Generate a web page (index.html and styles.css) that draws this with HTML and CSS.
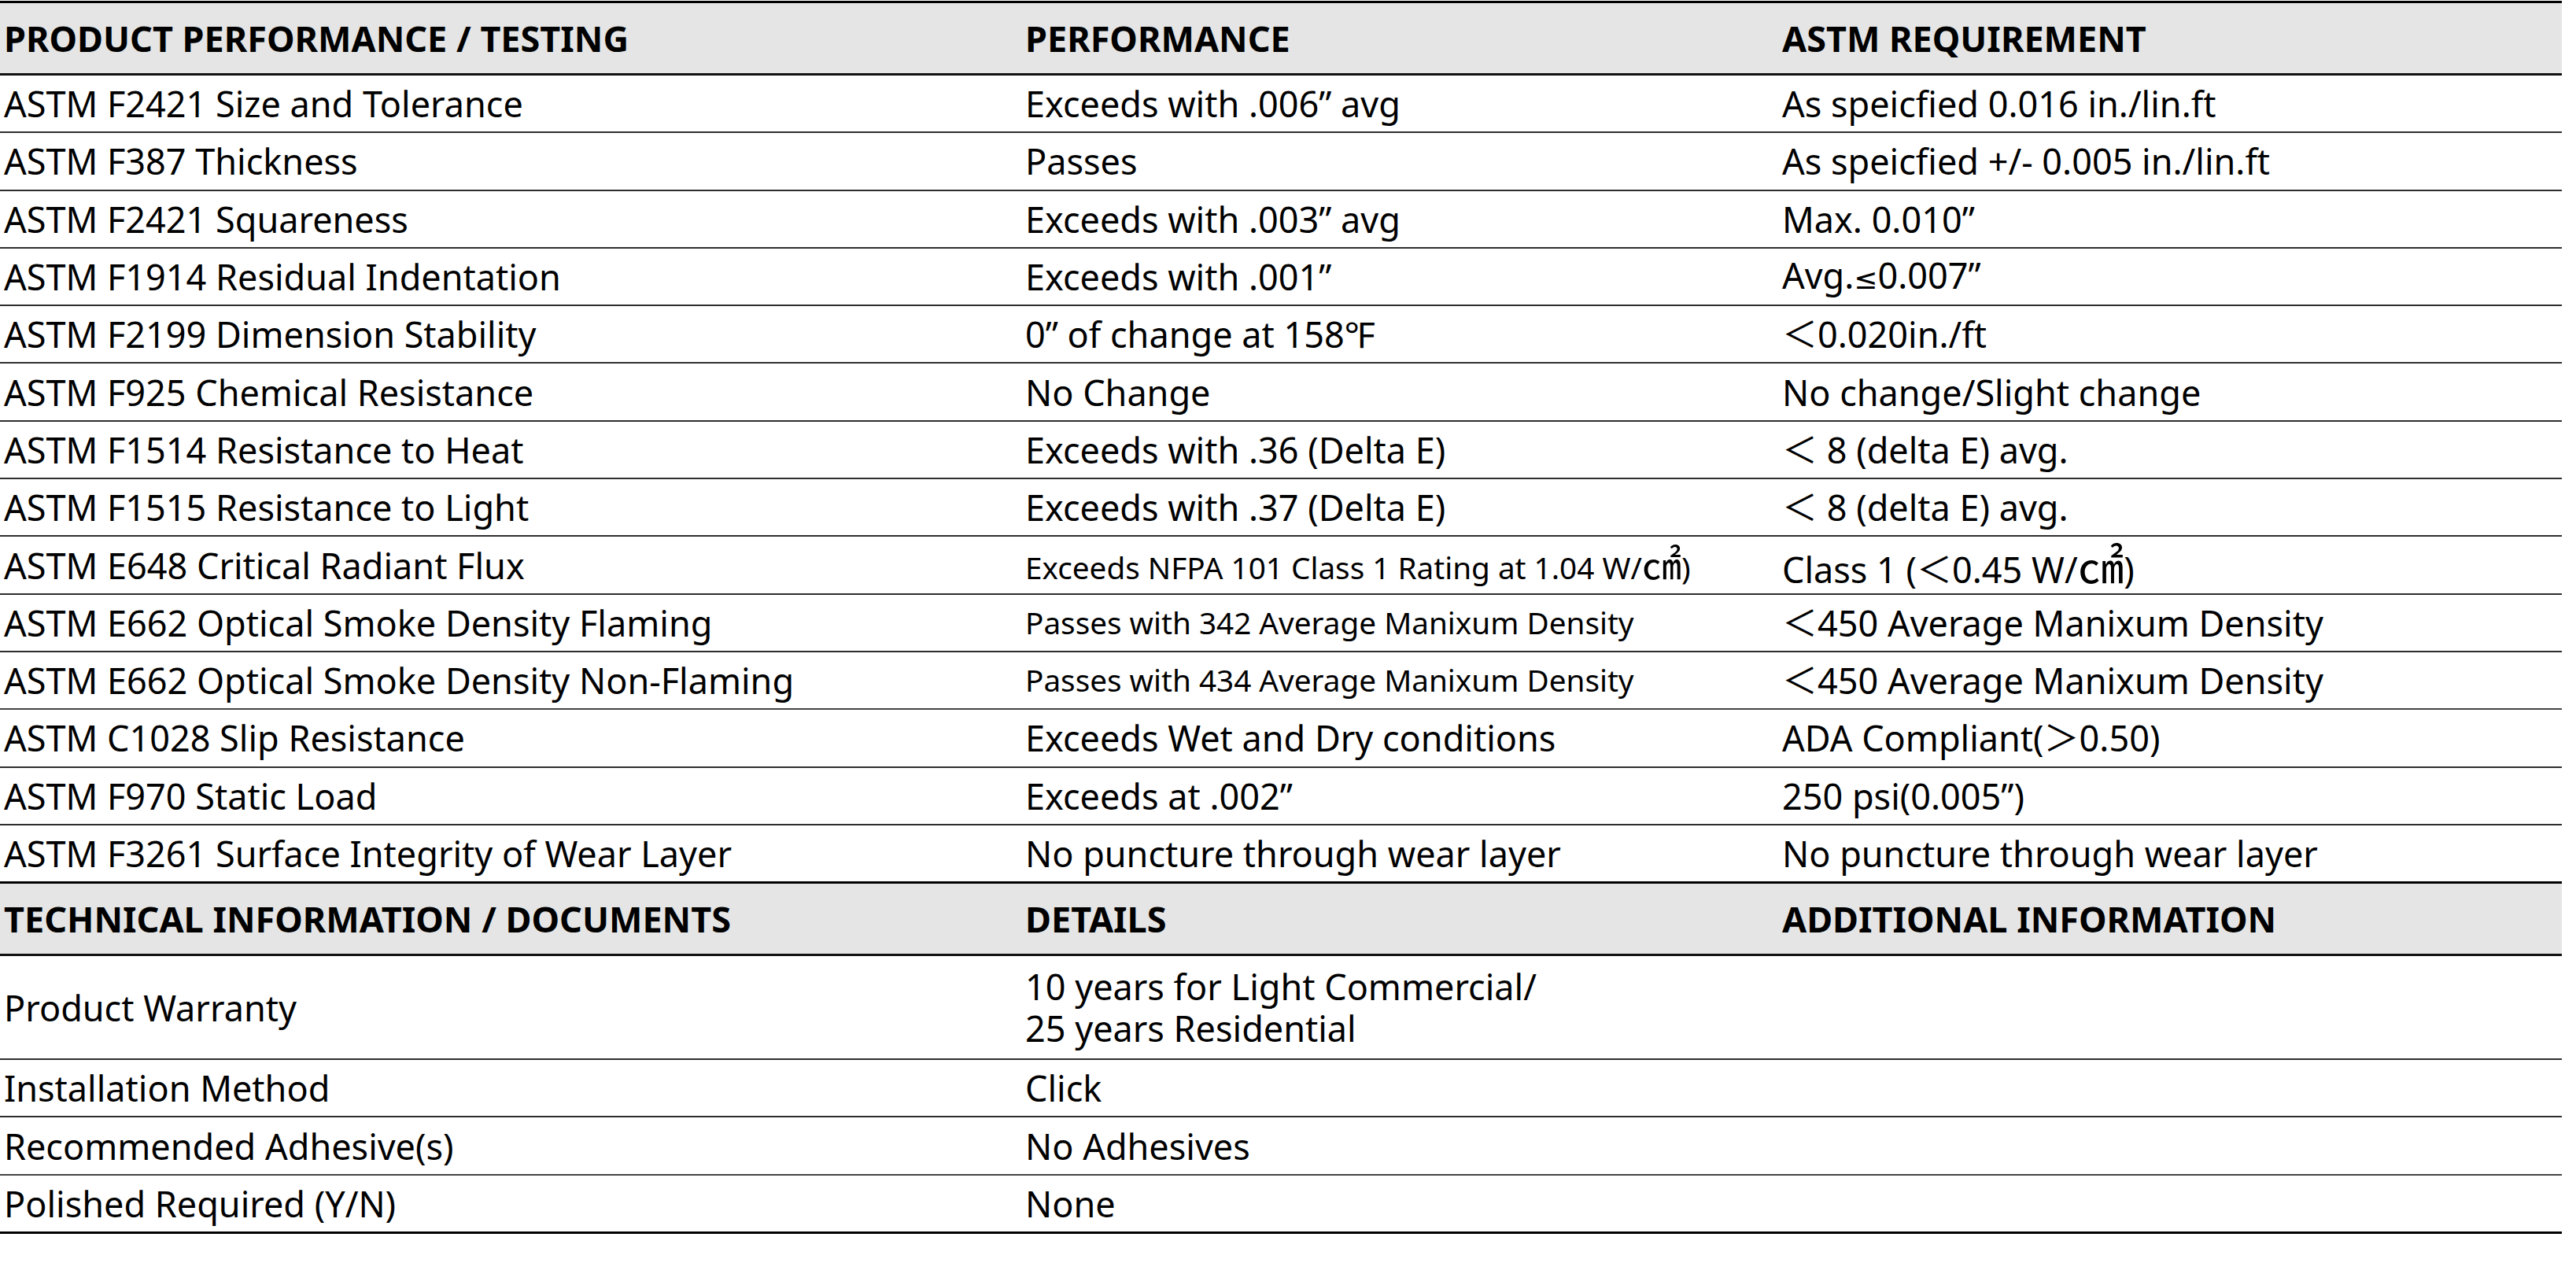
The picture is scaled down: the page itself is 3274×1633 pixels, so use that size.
FILE: index.html
```html
<!DOCTYPE html>
<html lang="en">
<head>
<meta charset="utf-8">
<title>Product Performance / Testing</title>
<link rel="stylesheet" href="styles.css">
</head>
<body>
<table class="spec">
  <colgroup>
    <col class="c1">
    <col class="c2">
    <col class="c3">
  </colgroup>
  <tbody>
    <tr class="head">
      <th>PRODUCT PERFORMANCE / TESTING</th>
      <th>PERFORMANCE</th>
      <th>ASTM REQUIREMENT</th>
    </tr>
    <tr><td>ASTM F2421 Size and Tolerance</td><td>Exceeds with .006” avg</td><td>As speicfied 0.016 in./lin.ft</td></tr>
    <tr><td>ASTM F387 Thickness</td><td>Passes</td><td>As speicfied +/- 0.005 in./lin.ft</td></tr>
    <tr><td>ASTM F2421 Squareness</td><td>Exceeds with .003” avg</td><td>Max. 0.010”</td></tr>
    <tr><td>ASTM F1914 Residual Indentation</td><td>Exceeds with .001”</td><td>Avg.<span class="sym">≤</span>0.007”</td></tr>
    <tr><td>ASTM F2199 Dimension Stability</td><td>0” of change at 158℉</td><td>＜0.020in./ft</td></tr>
    <tr><td>ASTM F925 Chemical Resistance</td><td>No Change</td><td>No change/Slight change</td></tr>
    <tr><td>ASTM F1514 Resistance to Heat</td><td>Exceeds with .36 (Delta E)</td><td>＜ 8 (delta E) avg.</td></tr>
    <tr><td>ASTM F1515 Resistance to Light</td><td>Exceeds with .37 (Delta E)</td><td>＜ 8 (delta E) avg.</td></tr>
    <tr><td>ASTM E648 Critical Radiant Flux</td><td class="small">Exceeds NFPA 101 Class 1 Rating at 1.04 W/<span class="unit">㎠</span>)</td><td>Class 1 (＜0.45 W/<span class="unit">㎠</span>)</td></tr>
    <tr><td>ASTM E662 Optical Smoke Density Flaming</td><td class="small">Passes with 342 Average Manixum Density</td><td>＜450 Average Manixum Density</td></tr>
    <tr class="grayline"><td>ASTM E662 Optical Smoke Density Non-Flaming</td><td class="small">Passes with 434 Average Manixum Density</td><td>＜450 Average Manixum Density</td></tr>
    <tr><td>ASTM C1028 Slip Resistance</td><td>Exceeds Wet and Dry conditions</td><td>ADA Compliant(＞0.50)</td></tr>
    <tr><td>ASTM F970 Static Load</td><td>Exceeds at .002”</td><td>250 psi(0.005”)</td></tr>
    <tr class="last"><td>ASTM F3261 Surface Integrity of Wear Layer</td><td>No puncture through wear layer</td><td>No puncture through wear layer</td></tr>
    <tr class="head">
      <th>TECHNICAL INFORMATION / DOCUMENTS</th>
      <th>DETAILS</th>
      <th>ADDITIONAL INFORMATION</th>
    </tr>
    <tr class="tall"><td>Product Warranty</td><td>10 years for Light Commercial/<br>25 years Residential</td><td></td></tr>
    <tr><td>Installation Method</td><td>Click</td><td></td></tr>
    <tr class="grayline"><td>Recommended Adhesive(s)</td><td>No Adhesives</td><td></td></tr>
    <tr class="end"><td>Polished Required (Y/N)</td><td>None</td><td></td></tr>
  </tbody>
</table>
</body>
</html>
```

FILE: styles.css
```css
html, body {
  margin: 0;
  padding: 0;
  background: #ffffff;
}

body {
  padding-top: 1px;
  font-family: "Noto Sans", "Noto Sans CJK SC", sans-serif;
  color: #000000;
}

.spec {
  width: 3256px;
  table-layout: fixed;
  border-collapse: separate;
  border-spacing: 0;
  font-size: 45px;
  line-height: 53px;
}

.c1 { width: 1298px; }
.c2 { width: 962px; }
.c3 { width: 996px; }

.spec th,
.spec td {
  padding: 0 5px;
  text-align: left;
  vertical-align: middle;
  white-space: nowrap;
}

.spec th {
  height: 89px;
  font-weight: 700;
  background: #e5e5e5;
  border-top: 3px solid #000000;
  border-bottom: 3px solid #111111;
}

.spec td {
  height: 71.3px;
  border-bottom: 2px solid #2e2e2e;
}

.spec .grayline td {
  border-bottom-color: #444444;
}

.spec .last td {
  border-bottom: 0;
}

.spec .tall td {
  height: 130px;
}

.spec .end td {
  border-bottom: 3px solid #000000;
}

.spec td.small {
  font-size: 38.7px;
}

.sym {
  font-family: "DejaVu Sans", sans-serif;
  font-size: 0.8em;
}

.unit {
  font-family: "Noto Sans CJK JP", sans-serif;
  font-size: 1.3em;
  line-height: 1;
}
```
